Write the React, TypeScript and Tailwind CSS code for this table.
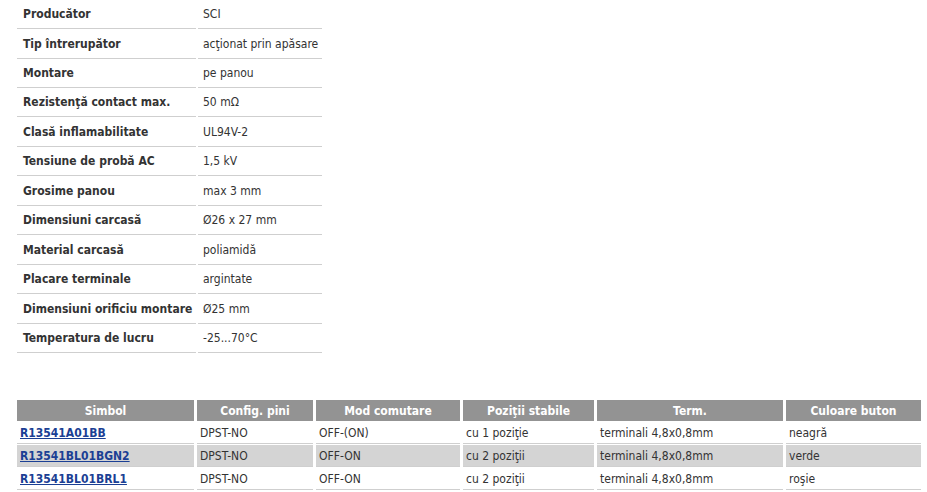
import React from "react";

const specs: [string, string, string][] = [
  ["Producător", "SCI", "h-[29px]"],
  ["Tip întrerupător", "acţionat prin apăsare", "h-[30px]"],
  ["Montare", "pe panou", "h-[29px]"],
  ["Rezistenţă contact max.", "50 mΩ", "h-[29px]"],
  ["Clasă inflamabilitate", "UL94V-2", "h-[30px]"],
  ["Tensiune de probă AC", "1,5 kV", "h-[29px]"],
  ["Grosime panou", "max 3 mm", "h-[30px]"],
  ["Dimensiuni carcasă", "Ø26 x 27 mm", "h-[29px]"],
  ["Material carcasă", "poliamidă", "h-[30px]"],
  ["Placare terminale", "argintate", "h-[29px]"],
  ["Dimensiuni orificiu montare", "Ø25 mm", "h-[30px]"],
  ["Temperatura de lucru", "-25...70°C", "h-[29px]"],
];

const cols: [string, string][] = [
  ["Simbol", "w-[177px]"],
  ["Config. pini", "w-[116px]"],
  ["Mod comutare", "w-[144px]"],
  ["Poziţii stabile", "w-[131px]"],
  ["Term.", "w-[186px]"],
  ["Culoare buton", "w-[135px]"],
];

const rows: { cells: string[]; bg: string }[] = [
  { cells: ["R13541A01BB", "DPST-NO", "OFF-(ON)", "cu 1 poziţie", "terminali 4,8x0,8mm", "neagră"], bg: "bg-white" },
  { cells: ["R13541BL01BGN2", "DPST-NO", "OFF-ON", "cu 2 poziţii", "terminali 4,8x0,8mm", "verde"], bg: "bg-[#d4d4d4]" },
  { cells: ["R13541BL01BRL1", "DPST-NO", "OFF-ON", "cu 2 poziţii", "terminali 4,8x0,8mm", "roşie"], bg: "bg-white" },
];

export default function App() {
  return (
    <div
      className="w-[927px] h-[492px] bg-white text-[#333] text-[12px]"
      style={{ fontFamily: "Tahoma, 'DejaVu Sans Condensed', 'DejaVu Sans', sans-serif" }}
    >
      <div className="pl-[17px] flex flex-col">
        {specs.map(([k, v, h]) => (
          <div key={k} className={`flex gap-[2px] ${h}`}>
            <div className="w-[179px] border-b border-[#cfcfcf] pl-[6px] flex items-center font-bold text-[#333]">
              {k}
            </div>
            <div className="w-[124px] border-b border-[#cfcfcf] pl-[5px] flex items-center">{v}</div>
          </div>
        ))}
      </div>

      <div className="pl-[17px] mt-[47px] flex flex-col gap-[1px]">
        <div className="flex gap-[3px] h-[21px]">
          {cols.map(([c, w]) => (
            <div key={c} className={`${w} bg-[#939393] text-white font-bold flex items-center justify-center`}>
              {c}
            </div>
          ))}
        </div>
        {rows.map((r) => (
          <div key={r.cells[0]} className="flex gap-[3px] h-[22px]">
            {r.cells.map((c, i) => (
              <div
                key={i}
                className={`${cols[i][1]} ${r.bg} border-b border-[#cfcfcf] flex items-center pl-[3px]`}
              >
                {i === 0 ? (
                  <a href="#" className="font-bold underline text-[#1b3f94]">
                    {c}
                  </a>
                ) : (
                  c
                )}
              </div>
            ))}
          </div>
        ))}
      </div>
    </div>
  );
}
